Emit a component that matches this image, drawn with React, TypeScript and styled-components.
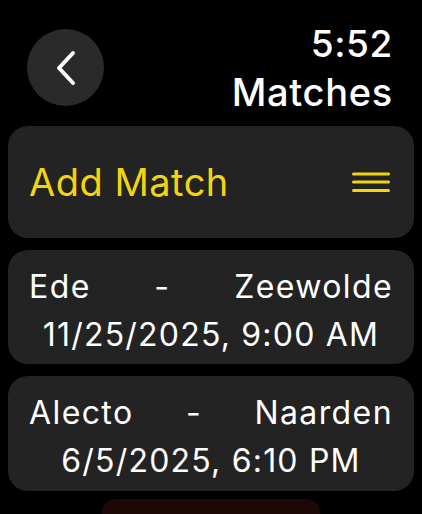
import React from "react";
import styled, { createGlobalStyle } from "styled-components";

const Global = createGlobalStyle`
  html, body { margin: 0; padding: 0; background: #000; }
  body { font-family: Inter, "Noto Sans", sans-serif; color: #fff; overflow: hidden; }
`;

const Screen = styled.div`
  width: 422px;
  height: 514px;
  box-sizing: border-box;
  padding: 0 8px;
  display: flex;
  flex-direction: column;
  overflow: hidden;
  & > * { flex-shrink: 0; }
`;

const Header = styled.header`
  display: flex;
  justify-content: space-between;
  align-items: flex-start;
  height: 126px;
  padding: 0 21px 0 19px;
`;

const BackButton = styled.button`
  margin-top: 29px;
  width: 77px;
  height: 77px;
  border-radius: 50%;
  border: none;
  background: #2a2a2a;
  display: flex;
  align-items: center;
  justify-content: center;
  padding: 0;
`;

const TitleBlock = styled.div`
  display: flex;
  flex-direction: column;
  align-items: flex-end;
  padding-top: 20px;
`;

const Time = styled.div`
  font-size: 37px;
  line-height: 48px;
  font-weight: 500;
  letter-spacing: 0.6px;
`;

const Title = styled.div`
  font-size: 38px;
  line-height: 49px;
  font-weight: 500;
  letter-spacing: 0.7px;
`;

const List = styled.div`
  display: flex;
  flex-direction: column;
  gap: 12px;
`;

const Card = styled.div<{ $h: number; $top?: number }>`
  background: #232323;
  border-radius: 20px;
  height: ${(p) => p.$h}px;
  box-sizing: border-box;
  padding: ${(p) => p.$top ?? 0}px 21px 0;
  display: flex;
  flex-direction: column;
  justify-content: center;
`;

const AddRow = styled.div`
  display: flex;
  align-items: center;
  justify-content: space-between;
`;

const AddLabel = styled.span`
  color: #f2d411;
  font-size: 38px;
  font-weight: 400;
  letter-spacing: 0.5px;
`;

const MenuIcon = styled.svg`
  margin-right: 3px;
`;

const Teams = styled.div`
  display: flex;
  justify-content: space-between;
  font-size: 32px;
  line-height: 48px;
  letter-spacing: 1.4px;
`;

const DateLine = styled.div`
  text-align: center;
  font-size: 32px;
  line-height: 48px;
  letter-spacing: 1.2px;
`;

const NextItem = styled.div`
  margin: 8px auto 0;
  width: 218px;
  height: 20px;
  border-radius: 14px 14px 0 0;
  background: #1e0807;
`;

const matches = [
  { home: "Ede", away: "Zeewolde", date: "11/25/2025, 9:00 AM", h: 114 },
  { home: "Alecto", away: "Naarden", date: "6/5/2025, 6:10 PM", h: 115 },
];

export default function App() {
  return (
    <>
      <Global />
      <Screen>
        <Header>
          <BackButton aria-label="Back">
            <svg width="24" height="36" viewBox="0 0 24 36">
              <path d="M19 3 L5 18 L19 33" fill="none" stroke="#fff" strokeWidth="4" strokeLinecap="round" strokeLinejoin="round" />
            </svg>
          </BackButton>
          <TitleBlock>
            <Time>5:52</Time>
            <Title>Matches</Title>
          </TitleBlock>
        </Header>
        <List>
          <Card $h={112}>
            <AddRow>
              <AddLabel>Add Match</AddLabel>
              <MenuIcon width="38" height="22" viewBox="0 0 38 22">
                <g stroke="#f2d411" strokeWidth="3" strokeLinecap="round">
                  <line x1="1.5" y1="3" x2="36.5" y2="3" />
                  <line x1="1.5" y1="11" x2="36.5" y2="11" />
                  <line x1="1.5" y1="19.5" x2="36.5" y2="19.5" />
                </g>
              </MenuIcon>
            </AddRow>
          </Card>
          {matches.map((m) => (
            <Card key={m.home} $h={m.h} $top={7}>
              <Teams>
                <span>{m.home}</span>
                <span>-</span>
                <span>{m.away}</span>
              </Teams>
              <DateLine>{m.date}</DateLine>
            </Card>
          ))}
        </List>
        <NextItem />
      </Screen>
    </>
  );
}
